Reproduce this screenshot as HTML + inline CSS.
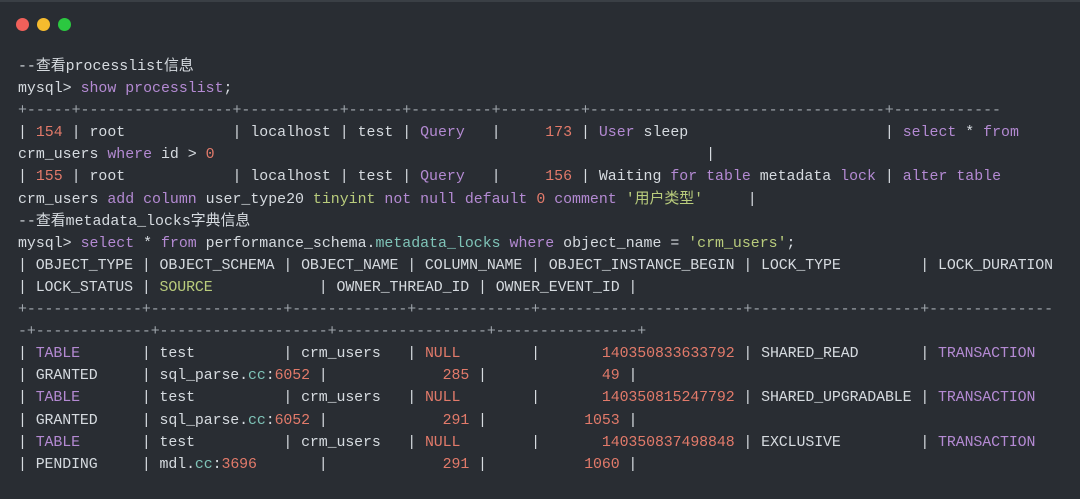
<!DOCTYPE html>
<html><head><meta charset="utf-8"><style>
html,body{margin:0;padding:0;}
body{width:1080px;height:499px;background:#292d33;overflow:hidden;position:relative;border-top:2px solid #3a3f45;box-sizing:border-box;}
.dot{position:absolute;top:16px;width:13px;height:13px;border-radius:50%;}
pre{position:absolute;left:18px;top:54px;margin:0;font-family:"Liberation Mono","Noto Sans CJK SC",monospace;font-size:14.9px;line-height:22.1px;color:#d6dbe0;white-space:pre;}
.t{letter-spacing:-0.09px}
.k{color:#b48ad3}.n{color:#e27a6a}.s{color:#b9cc7c}.g{color:#a0a6ad}.c{color:#7fc4b8}
</style></head><body>
<div class="dot" style="left:16px;background:#f0605a"></div>
<div class="dot" style="left:37px;background:#f5bb2e"></div>
<div class="dot" style="left:58px;background:#2bc840"></div>
<pre>--查看processlist信息
mysql&gt; <span class="k">show processlist</span>;
<span class="g">+-----+-----------------+-----------+------+---------+---------+---------------------------------+------------</span>
| <span class="n">154</span> | root            | localhost | test | <span class="k">Query</span>   |     <span class="n">173</span> | <span class="k">User</span> sleep                      | <span class="k">select</span> * <span class="k">from</span>
crm_users <span class="k">where</span> id &gt; <span class="n">0</span>                                                       |
| <span class="n">155</span> | root            | localhost | test | <span class="k">Query</span>   |     <span class="n">156</span> | Waiting <span class="k">for table</span> metadata <span class="k">lock</span> | <span class="k">alter table</span>
crm_users <span class="k">add column</span> user_type20 <span class="s">tinyint</span> <span class="k">not null default</span> <span class="n">0</span> <span class="k">comment</span> <span class="s">'用户类型'</span>     |
--查看metadata_locks字典信息
mysql&gt; <span class="k">select</span> * <span class="k">from</span> performance_schema.<span class="c">metadata_locks</span> <span class="k">where</span> object_name = <span class="s">'crm_users'</span>;
<span class="t">| OBJECT_TYPE | OBJECT_SCHEMA | OBJECT_NAME | COLUMN_NAME | OBJECT_INSTANCE_BEGIN | LOCK_TYPE         | LOCK_DURATION
| LOCK_STATUS | <span class="s">SOURCE</span>            | OWNER_THREAD_ID | OWNER_EVENT_ID |
<span class="g">+-------------+---------------+-------------+-------------+-----------------------+-------------------+--------------</span>
<span class="g">-+-------------+-------------------+-----------------+----------------+</span>
| <span class="k">TABLE</span>       | test          | crm_users   | <span class="n">NULL</span>        |       <span class="n">140350833633792</span> | SHARED_READ       | <span class="k">TRANSACTION</span>
| GRANTED     | sql_parse.<span class="c">cc</span>:<span class="n">6052</span> |             <span class="n">285</span> |             <span class="n">49</span> |
| <span class="k">TABLE</span>       | test          | crm_users   | <span class="n">NULL</span>        |       <span class="n">140350815247792</span> | SHARED_UPGRADABLE | <span class="k">TRANSACTION</span>
| GRANTED     | sql_parse.<span class="c">cc</span>:<span class="n">6052</span> |             <span class="n">291</span> |           <span class="n">1053</span> |
| <span class="k">TABLE</span>       | test          | crm_users   | <span class="n">NULL</span>        |       <span class="n">140350837498848</span> | EXCLUSIVE         | <span class="k">TRANSACTION</span>
| PENDING     | mdl.<span class="c">cc</span>:<span class="n">3696</span>       |             <span class="n">291</span> |           <span class="n">1060</span> |</span></pre>
</body></html>
